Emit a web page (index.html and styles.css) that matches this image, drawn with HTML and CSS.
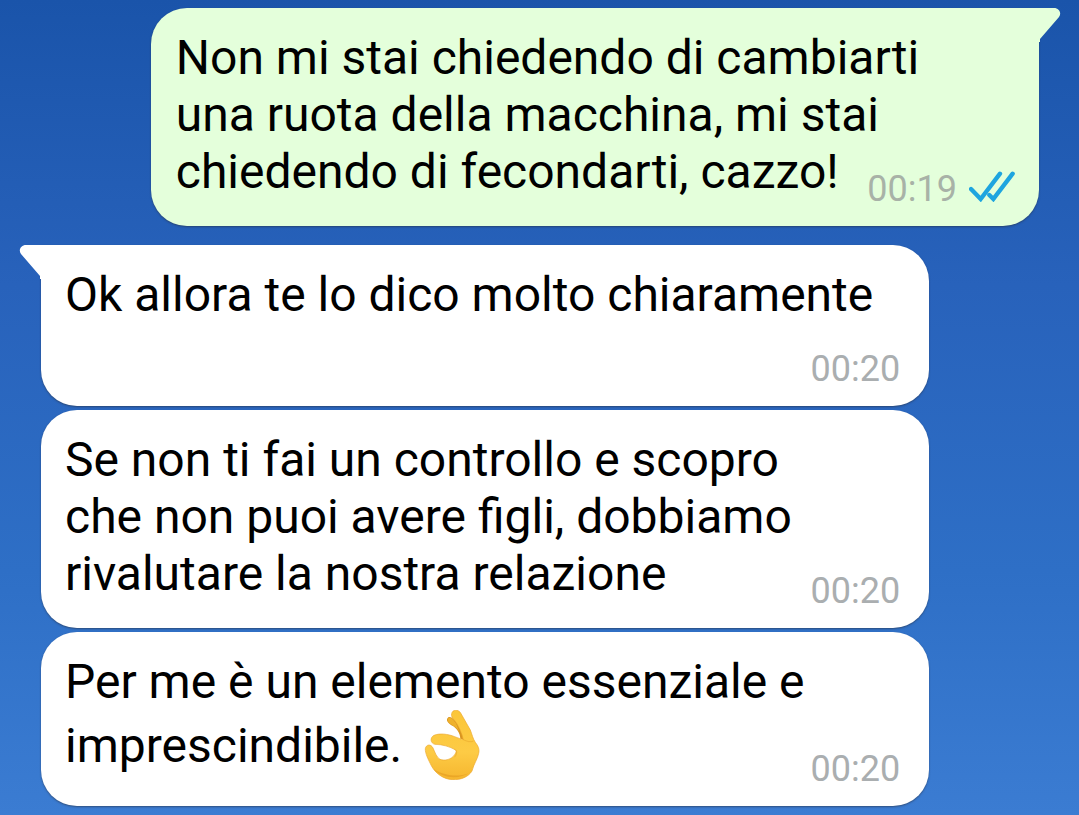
FILE: index.html
```html
<!DOCTYPE html>
<html lang="it">
<head>
  <meta charset="UTF-8">
  <meta name="viewport" content="width=device-width, initial-scale=1.0">
  <title>Chat</title>
  <link rel="stylesheet" href="styles.css">
</head>
<body>
  <main class="chat">
    <div class="message outgoing">
      <svg class="tail" viewBox="0 0 22 34" aria-hidden="true">
        <path d="M0 0H15C20 0 23 5 20 9L1 31V34H0Z"/>
      </svg>
      <p class="text">Non mi stai chiedendo di cambiarti<br>una ruota della macchina, mi stai<br>chiedendo di fecondarti, cazzo!</p>
      <div class="meta">
        <time>00:19</time>
        <svg class="ticks" viewBox="358 62 138 93" role="img" aria-label="Letto">
          <path d="M364 116L393 146L451 70M419 134L431 146L489 70"/>
        </svg>
      </div>
    </div>

    <div class="message incoming first">
      <svg class="tail" viewBox="0 0 22 34" aria-hidden="true">
        <path d="M22 0H7C2 0 -1 5 2 9L21 31V34H22Z"/>
      </svg>
      <p class="text">Ok allora te lo dico molto chiaramente</p>
      <div class="meta below"><time>00:20</time></div>
    </div>

    <div class="message incoming">
      <p class="text">Se non ti fai un controllo e scopro<br>che non puoi avere figli, dobbiamo<br>rivalutare la nostra relazione</p>
      <div class="meta"><time>00:20</time></div>
    </div>

    <div class="message incoming">
      <p class="text">Per me è un elemento essenziale e<br>imprescindibile.
        <svg class="emoji" viewBox="72 60 168 210" role="img" aria-label="OK">
          <defs>
            <linearGradient id="skin" x1="0" y1="0" x2="0" y2="1">
              <stop offset="0" stop-color="#fbc638"/>
              <stop offset="0.6" stop-color="#fdcb45"/>
              <stop offset="1" stop-color="#f6b62f"/>
            </linearGradient>
          </defs>
          <!-- ring finger behind -->
          <path d="M145 82C153 77 164 90 172 99L196 151L181 146C180 130 171 114 154 106C143 99 136 89 145 82Z" fill="#d9951f"/>
          <path d="M146 84C154 80 162 92 168 100L178 125C170 113 162 109 153 103C144 97 140 89 146 84Z" fill="#eeb12c"/>
          <!-- palm, thumb, index and middle finger -->
          <path d="M155 71C157 58 175 57 182 69L211 120C216 133 219 147 226 157C235 168 239 179 236 190C233 207 222 220 216 243C205 261 183 270 157 269C131 268 106 250 94 227C85 209 75 190 76 176C78 163 93 161 99 174C104 184 109 202 120 208C134 214 155 208 164 194C169 186 171 181 165 179C150 170 126 163 105 163C91 160 89 143 102 136C119 129 144 132 164 140C175 144 182 147 190 149C186 130 175 105 163 90C157 84 153 78 155 71Z" fill="url(#skin)" stroke="#eba82d" stroke-width="2"/>
          <path d="M190 149C201 155 212 157 219 154M165 179C173 184 171 193 164 201" fill="none" stroke="#e6a025" stroke-width="3" stroke-linecap="round" opacity="0.5"/>
          <path d="M101 238C124 263 174 272 211 247C195 259 143 264 101 238Z" fill="#e39a20" opacity="0.6"/>
        </svg>
      </p>
      <div class="meta"><time>00:20</time></div>
    </div>
  </main>
</body>
</html>
```

FILE: styles.css
```css
* {
  box-sizing: border-box;
}
body {
  margin: 0;
  min-height: 100vh;
  font-family: Roboto, sans-serif;
  background: linear-gradient(#1a54aa, #2862bb 35%, #2e6fc6 70%, #3b7cd2);
  color: #000;
}
.chat {
  display: flex;
  flex-direction: column;
  gap: 4px;
  padding: 8px 40px 8px 41px;
}
.message {
  position: relative;
  display: grid;
  width: 89%;
  padding: 21px 29px 16px 24px;
  border-radius: 36px;
  background-color: #fff;
  box-shadow: 0 1px 2px rgba(40, 50, 70, 0.6);
}
.outgoing {
  align-self: flex-end;
  padding-right: 24px;
  padding-left: 25px;
  border-top-right-radius: 0;
  background-color: #e4ffdb;
}
.first {
  margin-top: 15px;
  border-top-left-radius: 0;
}
.text {
  grid-area: 1 / 1;
  margin: 0;
  padding-bottom: 10px;
  font-size: 48px;
  line-height: 57px;
}
.meta {
  grid-area: 1 / 1;
  align-self: end;
  justify-self: end;
  display: flex;
  align-items: center;
  gap: 12px;
  font-size: 36px;
  line-height: 42px;
  color: #aaaeb0;
}
.outgoing .meta {
  color: #a8b2a7;
}
.below {
  grid-area: 2 / 1;
  margin-top: 15px;
}
.ticks {
  width: 46px;
  height: 31px;
  margin-bottom: 6px;
  fill: none;
  stroke: #1ea5df;
  stroke-width: 13;
  stroke-linecap: round;
}
.tail {
  position: absolute;
  top: 0;
  width: 22px;
  height: 34px;
}
.outgoing .tail {
  left: 100%;
  fill: #e4ffdb;
}
.incoming .tail {
  right: 100%;
  fill: #fff;
}
.emoji {
  width: 56px;
  height: 70px;
  margin-left: 10px;
  vertical-align: -18px;
}
```
